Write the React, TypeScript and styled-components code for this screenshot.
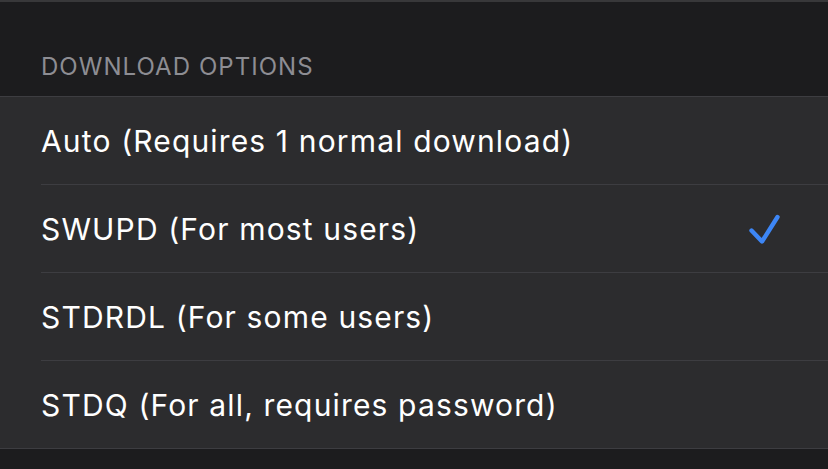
import styled, { createGlobalStyle } from "styled-components";

const Global = createGlobalStyle`
  html, body {
    margin: 0;
    padding: 0;
    background: #1c1c1e;
  }
  body {
    font-family: Inter, "Noto Sans", sans-serif;
    -webkit-font-smoothing: antialiased;
  }
`;

const Screen = styled.div`
  width: 828px;
  height: 469px;
  background: #1c1c1e;
  border-top: 2px solid #38383a;
  box-sizing: border-box;
  overflow: hidden;
`;

const SectionHeader = styled.div`
  height: 94px;
  box-sizing: border-box;
  padding: 0 41px 17px;
  display: flex;
  align-items: flex-end;
  color: #8d8d93;
  font-size: 24px;
  line-height: 1;
  letter-spacing: 1.05px;
  text-transform: uppercase;
`;

const Group = styled.ul`
  list-style: none;
  margin: 0;
  padding: 0;
  background: #2c2c2e;
  border-top: 1px solid #3d3d41;
  border-bottom: 1px solid #3d3d41;
`;

const Row = styled.li`
  padding-left: 41px;
`;

const RowInner = styled.div<{ $last?: boolean }>`
  height: 87px;
  display: flex;
  align-items: center;
  justify-content: space-between;
  padding-right: 48px;
  border-bottom: ${(p) => (p.$last ? "none" : "1px solid #3d3d41")};
  color: #ffffff;
  font-size: 30px;
  letter-spacing: 1.15px;
`;

const Check = styled.svg`
  width: 32px;
  height: 32px;
  flex: none;
`;

const options = [
  { label: "Auto (Requires 1 normal download)", selected: false },
  { label: "SWUPD (For most users)", selected: true },
  { label: "STDRDL (For some users)", selected: false },
  { label: "STDQ (For all, requires password)", selected: false },
];

export default function App() {
  return (
    <Screen>
      <Global />
      <SectionHeader>Download Options</SectionHeader>
      <Group>
        {options.map((o, i) => (
          <Row key={o.label}>
            <RowInner $last={i === options.length - 1}>
              <span>{o.label}</span>
              {o.selected && (
                <Check viewBox="0 0 32 32">
                  <path
                    d="M3.5 17.5 L14 28.5 L29.5 4"
                    fill="none"
                    stroke="#3d86f5"
                    strokeWidth="4.4"
                    strokeLinecap="round"
                    strokeLinejoin="round"
                  />
                </Check>
              )}
            </RowInner>
          </Row>
        ))}
      </Group>
    </Screen>
  );
}
